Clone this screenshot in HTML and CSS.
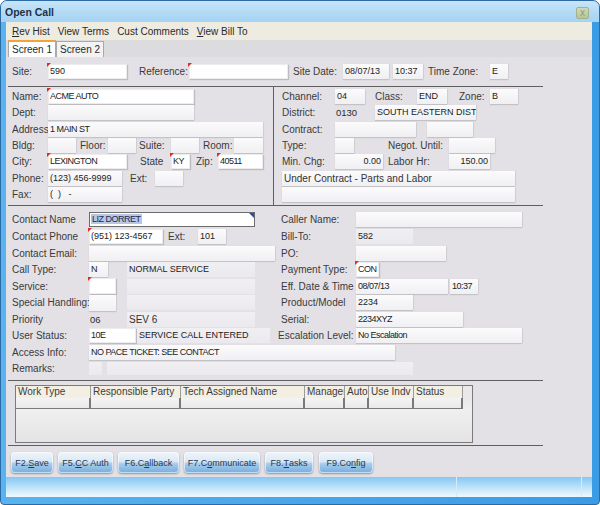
FILE: index.html
```html
<!DOCTYPE html>
<html>
<head>
<meta charset="utf-8">
<title>Open Call</title>
<link rel="stylesheet" href="styles.css">
</head>
<body>
<div class="win">
  <div class="titlebar"><span class="title">Open Call</span><span class="close">x</span></div>
  <div class="client">
    <div class="menubar">
      <span><u>R</u>ev Hist</span><span>View Terms</span><span>Cust Comments</span><span><u>V</u>iew Bill To</span>
    </div>
    <div class="tabs"><span class="tab active">Screen 1</span><span class="tab">Screen 2</span></div>
    <div class="page">
      <div class="row site">
        <span class="l w36">Site:</span><span class="f fw mk w79">590</span>
        <span class="l w50 ml12">Reference:</span><span class="f fw mk w99"></span>
        <span class="l w50 ml5">Site Date:</span><span class="f w46">08/07/13</span>
        <span class="f w30 ml4">10:37</span>
        <span class="l w62 ml5">Time Zone:</span><span class="f w18">E</span>
      </div>

      <div class="topsec">
        <div class="lcol">
          <div class="row"><span class="l w36">Name:</span><span class="f fw mk w146 n">ACME AUTO</span></div>
          <div class="row"><span class="l w36">Dept:</span><span class="f w146"></span></div>
          <div class="row"><span class="l w36">Address</span><span class="f w215 n">1 MAIN ST</span></div>
          <div class="row"><span class="l w36">Bldg:</span><span class="f w28"></span><span class="l w28 ml4">Floor:</span><span class="f w28"></span><span class="l w32 ml3">Suite:</span><span class="f w28"></span><span class="l w31 ml4">Room:</span><span class="f w29"></span></div>
          <div class="row"><span class="l w36">City:</span><span class="f fw mk w79 n">LEXINGTON</span><span class="l w31 ml13">State</span><span class="f fw mk w19 n">KY</span><span class="l w22 ml6">Zip:</span><span class="f fw mk w45 n">40511</span></div>
          <div class="row"><span class="l w36">Phone:</span><span class="f w74">(123) 456-9999</span><span class="l w25 ml8">Ext:</span><span class="f w28"></span></div>
          <div class="row"><span class="l w36">Fax:</span><span class="f w74 pre">(  )   -</span></div>
        </div>
        <div class="rcol">
          <div class="row"><span class="l w53">Channel:</span><span class="f w30">04</span><span class="l w42 ml10">Class:</span><span class="f w30">END</span><span class="l w31 ml12">Zone:</span><span class="f w28">B</span></div>
          <div class="row"><span class="l w53">District:</span><span class="t w40">0130</span><span class="f w101 up">SOUTH EASTERN DIST</span></div>
          <div class="row"><span class="l w53">Contract:</span><span class="f w81"></span><span class="f w46 ml11"></span></div>
          <div class="row"><span class="l w53">Type:</span><span class="f w19"></span><span class="l w61 ml34">Negot. Until:</span><span class="f w46"></span></div>
          <div class="row"><span class="l w53">Min. Chg:</span><span class="f w48 r">0.00</span><span class="l w61 ml5">Labor Hr:</span><span class="f w41 r">150.00</span></div>
          <div class="row"><span class="f w233 lbl">Under Contract - Parts and Labor</span></div>
          <div class="row"><span class="f w233"></span></div>
        </div>
      </div>

      <div class="lowsec">
        <div class="row">
          <div class="lh"><span class="l w77">Contact Name</span><span class="f focus w166"><span class="sel n">LIZ DORRET</span></span></div>
          <div class="rh"><span class="l w75">Caller Name:</span><span class="f w166"></span></div>
        </div>
        <div class="row">
          <div class="lh"><span class="l w77">Contact Phone</span><span class="f fw mk w74">(951) 123-4567</span><span class="l w30 ml5">Ext:</span><span class="f w28">101</span></div>
          <div class="rh"><span class="l w75">Bill-To:</span><span class="f faint w57">582</span></div>
        </div>
        <div class="row">
          <div class="lh"><span class="l w77">Contact Email:</span><span class="f w186"></span></div>
          <div class="rh"><span class="l w75">PO:</span><span class="f w90"></span></div>
        </div>
        <div class="row">
          <div class="lh"><span class="l w77">Call Type:</span><span class="f w19">N</span><span class="f faint w128 ml19 up">NORMAL SERVICE</span></div>
          <div class="rh"><span class="l w75">Payment Type:</span><span class="f fw mk w23 n">CON</span></div>
        </div>
        <div class="row">
          <div class="lh"><span class="l w77">Service:</span><span class="f fw mk w27 tall"></span><span class="f faint w128 ml11"></span></div>
          <div class="rh"><span class="l w75">Eff. Date &amp; Time</span><span class="f w92 n">08/07/13</span><span class="f w28 ml2 n">10:37</span></div>
        </div>
        <div class="row">
          <div class="lh"><span class="l w77">Special Handling:</span><span class="f w27 tall"></span><span class="f faint w128 ml11"></span></div>
          <div class="rh"><span class="l w75">Product/Model</span><span class="f w57">2234</span></div>
        </div>
        <div class="row">
          <div class="lh"><span class="l w77">Priority</span><span class="t w38">06</span><span class="f faint w128 lbl">SEV 6</span></div>
          <div class="rh"><span class="l w75">Serial:</span><span class="f w107 n">2234XYZ</span></div>
        </div>
        <div class="row">
          <div class="lh"><span class="l w77">User Status:</span><span class="f fw w47 n">10E</span><span class="f faint w133 ml1 up">SERVICE CALL ENTERED</span></div>
          <div class="rh"><span class="l w78 mln3">Escalation Level:</span><span class="f w166 n">No Escalation</span></div>
        </div>
        <div class="row">
          <div class="lh"><span class="l w77">Access Info:</span><span class="f w306 n">NO PACE TICKET: SEE CONTACT</span></div>
        </div>
        <div class="row">
          <div class="lh"><span class="l w77">Remarks:</span><span class="f faint w13 short"></span><span class="f faint w306 ml5 short"></span></div>
        </div>
      </div>

      <div class="gridsec">
        <div class="grid">
          <div class="ghead">
            <span class="gc c1">Work Type</span><span class="gc c2">Responsible Party</span><span class="gc c3">Tech Assigned Name</span><span class="gc c4">Manager</span><span class="gc c5">Auto</span><span class="gc c6">Use Indv</span><span class="gc c7">Status</span>
          </div>
          <div class="grow">
            <span class="gd c1"></span><span class="gd c2"></span><span class="gd c3"></span><span class="gd c4"></span><span class="gd c5"></span><span class="gd c6"></span><span class="gd c7"></span>
          </div>
        </div>
      </div>

      <div class="buttons">
        <span class="btn w42">F2.<u>S</u>ave</span>
        <span class="btn w55">F5.<u>C</u>C Auth</span>
        <span class="btn w61">F6.C<u>a</u>llback</span>
        <span class="btn w76">F7.C<u>o</u>mmunicate</span>
        <span class="btn w48">F8.<u>T</u>asks</span>
        <span class="btn w54 ml1">F9.Co<u>n</u>fig</span>
      </div>
    </div>
    <div class="statusbar"><span class="sb1"></span><span class="sb2"></span><span class="sb3"></span></div>
  </div>
</div>
</body>
</html>
```

FILE: styles.css
```css
* { box-sizing: border-box; }
html, body { margin: 0; padding: 0; background: #ffffff; }
body { font-family: "Liberation Sans", Arial, sans-serif; font-size: 10px; color: #353535; }

.win {
  width: 600px; height: 505px;
  display: flex; flex-direction: column;
  background: linear-gradient(90deg, #5ab3ef 0%, #4aa6ea 50%, #3b9ce6 100%);
  border: 1px solid #2b6aa3;
  border-radius: 7px 7px 4px 4px;
  overflow: hidden;
}

.titlebar {
  height: 21px; flex: none;
  display: flex; align-items: center; justify-content: space-between;
  padding: 0 10px 0 4px;
  background: linear-gradient(#c8e6fa, #b0d9f5 60%, #a6d3f3);
}
.title { font-weight: bold; font-size: 10.5px; color: #1d3048; }
.close {
  width: 13px; height: 12px; margin-top: 3px;
  border: 1px solid #a3b387; border-radius: 2px;
  background: linear-gradient(#cfdabb, #b6c59c);
  color: #8d9b7d; font-size: 10px; line-height: 9px; text-align: center;
}

.client {
  flex: none;
  margin: 0 7px 0 5px;
  height: 475px;
  display: flex; flex-direction: column;
  background: #e3e1e6;
}

.menubar {
  height: 18px; flex: none;
  display: flex; align-items: center; gap: 8px;
  padding-left: 6px;
  background: #eeebe1;
  color: #2a2a2a;
}
.menubar u { text-decoration: underline; }

.tabs {
  height: 17px; flex: none;
  display: flex; align-items: flex-end;
  padding-left: 2px;
  background: #dcdbdd;
}
.tab {
  height: 16px; padding: 0 3px; line-height: 15px;
  background: #f3f3f3; border: 1px solid #a9a9a9; border-bottom: none;
  color: #2a2a2a; white-space: nowrap; flex: none;
}
.tab.active {
  height: 17px; background: #ffffff;
  border-top: 2px solid #f0a43a; line-height: 15px;
}

.page { flex: 1; padding-left: 2px; }

.row { display: flex; align-items: center; }
.row > * { flex: none; }
.site { height: 15px; margin-top: 7px; padding-left: 4px; }

.l { white-space: nowrap; overflow: hidden; color: #3a3a3a; }
.t { font-size: 9.5px; color: #2a2a2a; padding-left: 1px; }
.f {
  position: relative;
  height: 15px; line-height: 15px;
  padding: 0 2px;
  font-size: 9px; color: #222222;
  white-space: nowrap; overflow: hidden;
  background: linear-gradient(#fbfbfc, #f0eff2);
  box-shadow: 0 1px 1px rgba(0,0,0,0.13), 1px 0 1px rgba(0,0,0,0.06);
}
.f.fw { background: #ffffff; box-shadow: inset 0 0 0 1px #ececec, 1px 1px 1px rgba(0,0,0,0.16); overflow: visible; }
.f.faint { background: linear-gradient(#f0eff2, #ebe9ee); box-shadow: none; }
.f.tall { height: 16px; }
.f.short { height: 13px; }
.f.r { text-align: right; }
.f.lbl { font-size: 10px; color: #333; }
.up { font-size: 9px; }
.n { font-size: 9px; letter-spacing: -0.5px; }
.pre { white-space: pre; }
.mk::before {
  content: ""; position: absolute; left: -1px; top: -1px;
  border-top: 4px solid #e12a2a; border-right: 4px solid transparent;
}
.f.focus { background: #ffffff; border: 1px solid #6b6b6b; box-shadow: none; line-height: 13px; padding-left: 1px; }
.f.focus::after {
  content: ""; position: absolute; right: 0; top: 0;
  border-top: 5px solid #1f4fbf; border-left: 5px solid transparent;
}
.sel { background: #b6c6e3; color: #1b2a55; padding: 0 1px; }

.topsec {
  width: 535px; height: 120px; margin-top: 7px;
  border-top: 1px solid #5f5f5f; border-bottom: 1px solid #5f5f5f;
  display: flex;
}
.lcol { width: 266px; border-right: 1px solid #5f5f5f; padding: 1.5px 0 0 4px; }
.rcol { flex: 1; padding: 1.5px 0 0 8px; }
.topsec .row { height: 16.33px; }

.lowsec {
  width: 535px; height: 175px;
  border-bottom: 1px solid #5f5f5f;
  padding-top: 5.7px;
}
.lowsec .row { height: 16.56px; }
.lh { width: 270px; display: flex; align-items: center; padding-left: 4px; flex: none; }
.rh { display: flex; align-items: center; padding-left: 3px; flex: none; }
.lh > *, .rh > * { flex: none; }

.gridsec {
  width: 535px; height: 65px;
  padding: 4px 0 0 7px;
  border-bottom: 1px solid #5f5f5f;
}
.grid {
  width: 458px; height: 58px;
  border: 1px solid #7a7a7a;
  background: linear-gradient(#e9e9ea 0, #e9e9ea 12px, #efefef 24px, #ebebec 36px, #e4e4e6 100%);
}
.ghead { display: flex; height: 12px; }
.gc {
  flex: none; height: 12px; line-height: 12px;
  padding-left: 2px;
  background: #f3efe3;
  border-right: 1px solid #9c9c9c;
  white-space: nowrap; overflow: hidden;
  color: #3c3c3c; font-size: 10px;
}
.grow { display: flex; height: 11px; }
.gd {
  flex: none; height: 11px;
  background: linear-gradient(#f4f4f4, #e9e9e9);
  border-right: 2px solid #7a7a7a; border-bottom: 1px solid #7a7a7a;
}
.c1 { width: 75px; } .c2 { width: 90px; } .c3 { width: 124px; } .c4 { width: 40px; }
.c5 { width: 24px; } .c6 { width: 45px; } .c7 { width: 49px; }

.buttons { display: flex; gap: 5px; margin-top: 6px; padding-left: 3px; }
.btn {
  flex: none; height: 21px;
  display: flex; align-items: center; justify-content: center;
  border-radius: 4px;
  background: linear-gradient(#eef5fb 0%, #dbe9f5 45%, #a8cbeb 56%, #74aede 100%);
  box-shadow: 0 1px 2px rgba(0,0,0,0.35), inset 0 0 0 1px rgba(255,255,255,0.55);
  color: #2a3949; font-size: 9px; white-space: nowrap;
}

.statusbar {
  height: 20px; flex: none; display: flex;
  background: linear-gradient(#86c7f3 0%, #b4def8 45%, #e2f2fc 85%, #eef8fe 100%);
}
.sb1 { width: 451px; border-right: 1px solid #d6ebf8; }
.sb2 { width: 125px; border-right: 1px solid #d6ebf8; }
.sb3 { flex: 1; }

/* widths */
.w13{width:13px}.w18{width:18px}.w19{width:19px}.w22{width:22px}.w23{width:23px}.w25{width:25px}
.w27{width:27px}.w28{width:28px}.w29{width:29px}.w30{width:30px}.w31{width:31px}.w32{width:32px}
.w36{width:36px}.w38{width:38px}.w40{width:40px}.w41{width:41px}.w42{width:42px}.w45{width:45px}
.w46{width:46px}.w47{width:47px}.w48{width:48px}.w50{width:50px}.w53{width:53px}.w54{width:54px}
.w55{width:55px}.w57{width:57px}.w61{width:61px}.w62{width:62px}.w74{width:74px}.w75{width:75px}
.w76{width:76px}.w77{width:77px}.w78{width:78px}.w79{width:79px}.w81{width:81px}.w90{width:90px}
.w92{width:92px}.w99{width:99px}.w101{width:101px}.w107{width:107px}.w128{width:128px}
.w133{width:133px}.w146{width:146px}.w166{width:166px}.w186{width:186px}.w215{width:215px}
.w233{width:233px}.w306{width:306px}
/* margins */
.ml1{margin-left:1px}.ml2{margin-left:2px}.ml3{margin-left:3px}.ml4{margin-left:4px}.ml5{margin-left:5px}
.ml6{margin-left:6px}.ml8{margin-left:8px}.ml10{margin-left:10px}.ml11{margin-left:11px}.ml12{margin-left:12px}
.ml13{margin-left:13px}.ml19{margin-left:19px}.ml34{margin-left:34px}.mln3{margin-left:-3px}
```
